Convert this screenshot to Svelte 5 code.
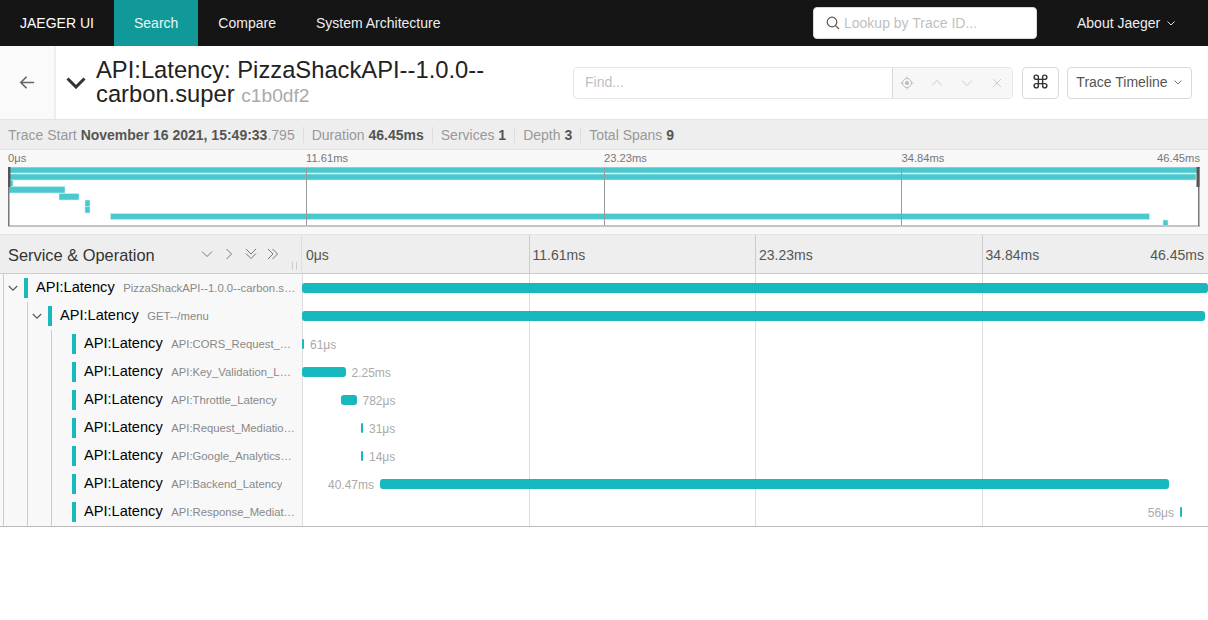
<script lang="ts">
    type Span = {
        op: string;
        depth: number;
        start: number;
        width: number;
        label?: string;
        labelLeft?: boolean;
        open?: boolean;
    };

    // x offsets are pixels from the start of the 906px timeline column
    const spans: Span[] = [
        { op: "PizzaShackAPI--1.0.0--carbon.super", depth: 0, start: 0, width: 906, open: true },
        { op: "GET--/menu", depth: 1, start: 0, width: 903, open: true },
        { op: "API:CORS_Request_Handler_Latency", depth: 2, start: 0, width: 2, label: "61μs" },
        { op: "API:Key_Validation_Latency", depth: 2, start: 0, width: 43.5, label: "2.25ms" },
        { op: "API:Throttle_Latency", depth: 2, start: 39, width: 15.5, label: "782μs" },
        { op: "API:Request_Mediation_Latency", depth: 2, start: 59, width: 2, label: "31μs" },
        { op: "API:Google_Analytics_Latency", depth: 2, start: 59, width: 2, label: "14μs" },
        { op: "API:Backend_Latency", depth: 2, start: 78, width: 789, label: "40.47ms", labelLeft: true },
        { op: "API:Response_Mediation_Latency", depth: 2, start: 878, width: 2, label: "56μs", labelLeft: true },
    ];

    const miniBars = [
        [1, 0, 1188, 5.5],
        [1, 6.5, 1187, 6],
        [2, 12.5, 3, 6.5],
        [1, 19, 56, 6.5],
        [51, 26, 20, 6.5],
        [77, 32.5, 5, 6.5],
        [77, 39, 5, 6.5],
        [102.5, 46, 1039, 6],
        [1155, 52.5, 5, 6.5],
    ];

    const miniTicks = [
        { x: 0, label: "0μs" },
        { x: 298, label: "11.61ms" },
        { x: 596, label: "23.23ms" },
        { x: 893.5, label: "34.84ms" },
    ];

    const rulerTicks = ["11.61ms", "23.23ms", "34.84ms"];
</script>

<header class="nav">
    <span class="brand">JAEGER UI</span>
    <a class="tab active" href="#search">Search</a>
    <a class="tab" href="#compare">Compare</a>
    <a class="tab" href="#arch">System Architecture</a>
    <div class="lookup">
        <svg width="14" height="14" viewBox="0 0 14 14" fill="none" stroke="#555" stroke-width="1.2">
            <circle cx="6" cy="6" r="4.8" />
            <path d="M9.6 9.6l3.4 3.4" />
        </svg>
        <span>Lookup by Trace ID...</span>
    </div>
    <span class="about">About Jaeger
        <svg width="10" height="10" viewBox="0 0 10 10" fill="none" stroke="#ddd" stroke-width="1"><path d="M1.5 3.5L5 7l3.5-3.5" /></svg>
    </span>
</header>

<section class="title-row">
    <div class="back">
        <svg width="16" height="15" viewBox="0 0 18 16" fill="none" stroke="#666" stroke-width="1.8">
            <path d="M17 8H2M8.5 1.5L2 8l6.5 6.5" />
        </svg>
    </div>
    <svg class="collapse" width="20" height="12" viewBox="0 0 20 12" fill="none" stroke="#333" stroke-width="3">
        <path d="M1.5 1.5L10 10l8.5-8.5" />
    </svg>
    <h1>API:Latency: PizzaShackAPI--1.0.0--carbon.super <small>c1b0df2</small></h1>
    <div class="find">
        <div class="find-input">Find...</div>
        <div class="find-tools">
            <svg width="14" height="14" viewBox="0 0 14 14" fill="none" stroke="#bbb" stroke-width="1">
                <circle cx="7" cy="7" r="4.5" />
                <circle cx="7" cy="7" r="2" fill="#bbb" stroke="none" />
                <path d="M7 .5v2M7 11.5v2M.5 7h2M11.5 7h2" />
            </svg>
            <svg width="14" height="14" viewBox="0 0 14 14" fill="none" stroke="#ccc" stroke-width="1"><path d="M2 9.5l5-5 5 5" /></svg>
            <svg width="14" height="14" viewBox="0 0 14 14" fill="none" stroke="#ccc" stroke-width="1"><path d="M2 4.5l5 5 5-5" /></svg>
            <svg width="14" height="14" viewBox="0 0 14 14" fill="none" stroke="#ccc" stroke-width="1"><path d="M3 3l8 8M11 3l-8 8" /></svg>
        </div>
    </div>
    <button class="cmd" type="button">
        <svg width="17" height="17" viewBox="0 0 24 24" fill="none" stroke="#333" stroke-width="2">
            <path d="M18 3a3 3 0 0 0-3 3v12a3 3 0 0 0 3 3 3 3 0 0 0 3-3 3 3 0 0 0-3-3H6a3 3 0 0 0-3 3 3 3 0 0 0 3 3 3 3 0 0 0 3-3V6a3 3 0 0 0-3-3 3 3 0 0 0-3 3 3 3 0 0 0 3 3h12a3 3 0 0 0 3-3 3 3 0 0 0-3-3z" />
        </svg>
    </button>
    <button class="view" type="button">Trace Timeline
        <svg width="10" height="10" viewBox="0 0 10 10" fill="none" stroke="#777" stroke-width="1"><path d="M1.5 3.5L5 7l3.5-3.5" /></svg>
    </button>
</section>

<section class="stats">
    <span class="stat">Trace Start <b>November 16 2021, 15:49:33</b>.795</span>
    <span class="stat">Duration <b>46.45ms</b></span>
    <span class="stat">Services <b>1</b></span>
    <span class="stat">Depth <b>3</b></span>
    <span class="stat">Total Spans <b>9</b></span>
</section>

<section class="minimap">
    <div class="mini-labels">
        {#each miniTicks as t}
            <span class="mini-label" style="left: {t.x}px">{t.label}</span>
        {/each}
        <span class="mini-label end">46.45ms</span>
    </div>
    <svg class="mini-canvas" width="1192" height="60" viewBox="0 0 1192 60">
        {#each miniBars as b}
            <rect x={b[0]} y={b[1] + 0.5} width={b[2]} height={b[3]} fill="#4bc8ce" stroke="#c9eef0" stroke-width="0.6" />
        {/each}
        {#each miniTicks.slice(1) as t}
            <rect x={Math.floor(t.x)} y="0" width="1" height="59" fill="#9a9a9a" />
        {/each}
        <rect x="0" y="0" width="1192" height="1" fill="#bbb" />
        <rect x="0" y="58" width="1192" height="2" fill="#c4c4c4" />
        <rect x="0" y="0" width="1.5" height="59" fill="#777" />
        <rect x="1190" y="0" width="1.5" height="59" fill="#777" />
        <rect x="0" y="0" width="2.5" height="20" fill="#555" />
        <rect x="1188.5" y="0" width="3" height="20" fill="#555" />
    </svg>
</section>

<section class="ruler">
    <div class="ruler-left">
        <span class="ruler-title">Service &amp; Operation</span>
        <div class="ruler-icons">
            <svg width="12" height="12" viewBox="0 0 12 12" fill="none" stroke="#777" stroke-width="1"><path d="M1 3.5L6 8.5 11 3.5" /></svg>
            <svg width="12" height="12" viewBox="0 0 12 12" fill="none" stroke="#777" stroke-width="1"><path d="M3.5 1L8.5 6 3.5 11" /></svg>
            <svg width="12" height="12" viewBox="0 0 12 12" fill="none" stroke="#777" stroke-width="1"><path d="M1 1L6 6l5-5M1 5.5l5 5 5-5" /></svg>
            <svg width="12" height="12" viewBox="0 0 12 12" fill="none" stroke="#777" stroke-width="1"><path d="M1 1l5 5-5 5M5.5 1l5 5-5 5" /></svg>
        </div>
        <span class="grip"></span>
    </div>
    <div class="ruler-right">
        <span class="ruler-tick first">0μs</span>
        {#each rulerTicks as t}
            <span class="ruler-tick">{t}</span>
        {/each}
        <span class="ruler-end">46.45ms</span>
    </div>
</section>

<section class="rows">
    <div class="gridlines"><i></i><i></i><i></i></div>
    {#each spans as s}
        <div class="row">
            <div class="name">
                {#each Array(s.depth + 1) as _}
                    <span class="guide"></span>
                {/each}
                <span class="toggle">
                    {#if s.open}
                        <svg width="10" height="10" viewBox="0 0 10 10" fill="none" stroke="#555" stroke-width="1.1"><path d="M.8 3L5 7.2 9.2 3" /></svg>
                    {/if}
                </span>
                <span class="marker"></span>
                <span class="svc">API:Latency</span>
                <span class="op">{s.op}</span>
            </div>
            <div class="track">
                <span class="bar" style="left: {s.start}px; width: {s.width}px"></span>
                {#if s.label}
                    {#if s.labelLeft}
                        <span class="dur" style="right: {906 - s.start + 6}px">{s.label}</span>
                    {:else}
                        <span class="dur" style="left: {s.start + s.width + 6}px">{s.label}</span>
                    {/if}
                {/if}
            </div>
        </div>
    {/each}
</section>

<style>
    :global(body) {
        margin: 0;
        background: #fff;
        font-family: "Liberation Sans", Arial, sans-serif;
        color: #000;
    }

    .nav {
        display: flex;
        align-items: center;
        height: 46px;
        background: #151515;
        color: #fff;
        font-size: 14px;
    }

    .brand {
        width: 114px;
        box-sizing: border-box;
        padding-left: 20px;
    }

    .tab {
        display: flex;
        align-items: center;
        height: 100%;
        padding: 0 20px;
        color: #eee;
        text-decoration: none;
    }

    .tab.active {
        background: #119999;
        color: #e8f6f6;
    }

    .lookup {
        display: flex;
        align-items: center;
        gap: 4px;
        box-sizing: border-box;
        width: 224px;
        height: 32px;
        margin-left: auto;
        padding-left: 12px;
        background: #fff;
        border: 1px solid #d9d9d9;
        border-radius: 4px;
        color: #bfbfbf;
    }

    .about {
        display: flex;
        align-items: center;
        gap: 6px;
        width: 171px;
        box-sizing: border-box;
        padding-left: 40px;
        color: #eee;
        white-space: nowrap;
    }

    .title-row {
        display: flex;
        align-items: center;
        height: 74px;
        border-bottom: 1px solid #e4e4e4;
        box-sizing: border-box;
    }

    .back {
        display: flex;
        align-items: center;
        justify-content: center;
        width: 54px;
        height: 100%;
        background: #fafafa;
        border-right: 2px solid #eee;
    }

    .collapse {
        margin-left: 10px;
        flex: none;
    }

    h1 {
        width: 450px;
        margin: 0 0 0 10px;
        font-size: 23.75px;
        font-weight: 400;
        line-height: 23.5px;
        color: #222;
    }

    h1 small {
        font-size: 19.2px;
        color: #aaa;
    }

    .find {
        display: flex;
        width: 440px;
        height: 32px;
        margin-left: 27px;
        box-sizing: border-box;
        border: 1px solid #e6e6e6;
        border-radius: 4px;
        font-size: 14px;
        flex: none;
    }

    .find-input {
        display: flex;
        align-items: center;
        width: 319px;
        padding: 0 0 2px 11px;
        box-sizing: border-box;
        color: #bfbfbf;
        border-right: 1px solid #d9d9d9;
    }

    .find-tools {
        display: flex;
        align-items: center;
        gap: 16px;
        flex: 1;
        padding-left: 7px;
        background: #f7f7f7;
    }

    button {
        display: flex;
        align-items: center;
        justify-content: center;
        height: 32px;
        padding: 0 0 2px;
        background: #fff;
        border: 1px solid #d9d9d9;
        border-radius: 4px;
        font-family: inherit;
        font-size: 14px;
        color: #555;
        flex: none;
    }

    .cmd {
        width: 37px;
        margin-left: 9px;
    }

    .view {
        gap: 5px;
        width: 125px;
        margin-left: 8px;
    }

    .stats {
        display: flex;
        align-items: center;
        height: 30px;
        padding-left: 8px;
        box-sizing: border-box;
        background: #eee;
        border-bottom: 1px solid #e4e4e4;
        font-size: 14px;
        color: #999;
    }

    .stat + .stat {
        margin-left: 8px;
        padding-left: 8px;
        border-left: 1px solid #ddd;
    }

    .stat b {
        color: #555;
    }

    .minimap {
        height: 85px;
        padding: 0 8px;
        box-sizing: border-box;
        background: #f8f8f8;
        border-bottom: 1px solid #e4e4e4;
    }

    .mini-labels {
        position: relative;
        height: 17px;
        font-size: 11.2px;
        color: #777;
    }

    .mini-label {
        position: absolute;
        top: 2px;
    }

    .mini-label.end {
        right: 0;
    }

    .mini-canvas {
        display: block;
        background: #fff;
    }

    .ruler {
        display: flex;
        height: 39px;
        box-sizing: border-box;
        background: #eee;
        border-bottom: 1px solid #ccc;
    }

    .ruler-left {
        position: relative;
        display: flex;
        align-items: center;
        width: 303px;
        box-sizing: border-box;
        padding: 2px 0 0 8px;
        border-right: 1px solid #ddd;
    }

    .ruler-title {
        font-size: 16.4px;
        color: #333;
        white-space: nowrap;
    }

    .ruler-icons {
        display: flex;
        gap: 10px;
        margin-left: 46px;
        margin-bottom: 2px;
    }

    .grip {
        position: absolute;
        right: 4px;
        bottom: 3px;
        width: 3px;
        height: 8px;
        border: solid #ccc;
        border-width: 0 1px;
    }

    .ruler-right {
        position: relative;
        display: flex;
        align-items: center;
        flex: 1;
        font-size: 14px;
        color: #555;
    }

    .ruler-tick {
        box-sizing: border-box;
        width: 226.5px;
        padding: 1px 0 0 3px;
        border-left: 1px solid #ccc;
        height: 100%;
        line-height: 38px;
    }

    .ruler-tick.first {
        border-left: 0;
        padding-left: 4px;
    }

    .ruler-end {
        position: absolute;
        right: 4px;
        top: 12px;
    }

    .rows {
        position: relative;
        border-bottom: 1px solid #bbb;
    }

    .gridlines {
        position: absolute;
        inset: 0 0 0 303px;
        display: flex;
        pointer-events: none;
    }

    .gridlines i {
        width: 226.5px;
        box-sizing: border-box;
        border-right: 1px solid #ddd;
    }

    .row {
        position: relative;
        display: flex;
        height: 28px;
    }

    .name {
        display: flex;
        align-items: center;
        box-sizing: border-box;
        width: 303px;
        padding-right: 5px;
        background: #f8f8f8;
        border-right: 1px solid #ddd;
        overflow: hidden;
    }

    .guide {
        flex: none;
        align-self: stretch;
        width: 24px;
        box-sizing: border-box;
        margin-left: 3px;
        margin-right: -3px;
        border-left: 1px solid #ccc;
    }

    .toggle {
        display: flex;
        flex: none;
        justify-content: center;
        width: 24px;
        margin-left: -23px;
        margin-right: -1px;
    }

    .marker {
        flex: none;
        width: 4px;
        height: 20px;
        background: #17b8be;
    }

    .svc {
        flex: none;
        margin-left: 8px;
        padding-bottom: 2px;
        font-size: 14.6px;
        color: #000;
    }

    .op {
        flex: 0 1 auto;
        min-width: 0;
        margin-left: 8.5px;
        font-size: 11.3px;
        color: #888;
        white-space: nowrap;
        overflow: hidden;
        text-overflow: ellipsis;
    }

    .track {
        position: relative;
        flex: 1;
        margin-left: -1px;
    }

    .bar {
        position: absolute;
        top: 9px;
        height: 10px;
        border-radius: 3px;
        background: #17b8be;
    }

    .dur {
        position: absolute;
        top: 8px;
        font-size: 12px;
        line-height: 14px;
        color: #aaa;
    }
</style>
